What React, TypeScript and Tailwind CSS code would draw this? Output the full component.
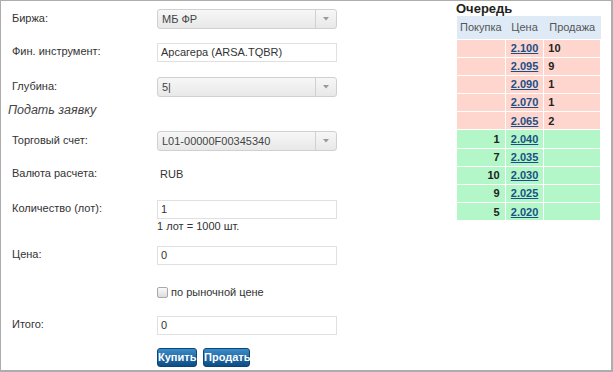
const asks = [
  { price: "2.100", qty: "10" },
  { price: "2.095", qty: "9" },
  { price: "2.090", qty: "1" },
  { price: "2.070", qty: "1" },
  { price: "2.065", qty: "2" },
];

const bids = [
  { price: "2.040", qty: "1" },
  { price: "2.035", qty: "7" },
  { price: "2.030", qty: "10" },
  { price: "2.025", qty: "9" },
  { price: "2.020", qty: "5" },
];

function Select({ value }: { value: string }) {
  return (
    <div className="flex h-[20px] w-[180px] items-center rounded-[3px] border border-[#d0d0d0] bg-gradient-to-b from-[#f7f7f7] to-[#e8e8e8] text-[#444]">
      <span className="flex-1 pl-[4px]">{value}</span>
      <span className="flex h-full w-[21px] items-center justify-center border-l border-[#d0d0d0]">
        <svg width="6" height="4" viewBox="0 0 6 4">
          <path d="M0 0 L6 0 L3 3.5 Z" fill="#999" />
        </svg>
      </span>
    </div>
  );
}

function Field({ value }: { value: string }) {
  return (
    <div className="flex h-[19px] w-[180px] items-center border border-[#e0e0e0] bg-white pl-[3px] text-[#333]">
      {value}
    </div>
  );
}

function Row({ label, children, className = "" }: { label: string; children: React.ReactNode; className?: string }) {
  return (
    <div className={`flex items-center ${className}`}>
      <div className="w-[145px] -translate-y-[1px]">{label}</div>
      {children}
    </div>
  );
}

export default function App() {
  return (
    <div
      className="flex h-[372px] w-[613px] border-t border-l border-r-2 border-b-2 border-[#adadad] bg-white text-[11px] text-[#333]"
      style={{ fontFamily: "'Liberation Sans', Arial, sans-serif" }}
    >
      <div className="flex w-[455px] flex-col pl-[11px] pt-[8px]">
        <Row label="Биржа:" className="h-[20px]">
          <Select value="МБ ФР" />
        </Row>
        <Row label="Фин. инструмент:" className="mt-[14px] h-[19px]">
          <Field value="Арсагера (ARSA.TQBR)" />
        </Row>
        <Row label="Глубина:" className="mt-[15px] h-[20px]">
          <Select value="5|" />
        </Row>
        <div className="-ml-[4px] mt-[5px] h-[16px] text-[12.5px] italic leading-[16px] text-[#444]">
          Подать заявку
        </div>
        <Row label="Торговый счет:" className="mt-[13px] h-[20px]">
          <Select value="L01-00000F00345340" />
        </Row>
        <Row label="Валюта расчета:" className="mt-[13px] h-[20px]">
          <span className="pl-[3px]">RUB</span>
        </Row>
        <Row label="Количество (лот):" className="mt-[16px] h-[19px]">
          <Field value="1" />
        </Row>
        <div className="mt-[1px] h-[12px] pl-[145px] leading-[12px]">1 лот = 1000 шт.</div>
        <Row label="Цена:" className="mt-[14px] h-[19px]">
          <Field value="0" />
        </Row>
        <div className="mt-[17px] flex h-[20px] items-center pl-[145px]">
          <span className="h-[11px] w-[11px] rounded-[2px] border border-[#a8a8a8] bg-gradient-to-b from-[#fafafa] to-[#dcdcdc]" />
          <span className="ml-[3px]">по рыночной цене</span>
        </div>
        <Row label="Итого:" className="mt-[14px] h-[19px]">
          <Field value="0" />
        </Row>
        <div className="mt-[13px] flex h-[19px] gap-[6px] pl-[145px]">
          <button className="h-[19px] w-[40px] rounded-[3px] border border-[#0b4476] bg-gradient-to-b from-[#3a8cc8] to-[#0c4d86] text-[11px] font-bold text-white">
            Купить
          </button>
          <button className="h-[19px] w-[47px] rounded-[3px] border border-[#0b4476] bg-gradient-to-b from-[#3a8cc8] to-[#0c4d86] text-[11px] font-bold text-white">
            Продать
          </button>
        </div>
      </div>

      <div className="flex flex-col">
        <div className="h-[15px] text-[13px] font-bold leading-[15px] text-[#222]">Очередь</div>
        <table className="w-[145px] border-collapse">
          <thead>
            <tr className="h-[23px] bg-[#deebf7] text-[#555]">
              <th className="w-[49px] font-normal">Покупка</th>
              <th className="w-[39px] font-normal">Цена</th>
              <th className="w-[57px] font-normal">Продажа</th>
            </tr>
          </thead>
          <tbody>
            {asks.map((r) => (
              <tr key={r.price} className="h-[18.2px] bg-[#ffd6cd] font-bold">
                <td className="border border-white" />
                <td className="border border-white text-center">
                  <a className="text-[#1b4f86] underline">{r.price}</a>
                </td>
                <td className="border border-white pl-[4px] text-[#222]">{r.qty}</td>
              </tr>
            ))}
            {bids.map((r) => (
              <tr key={r.price} className="h-[18.2px] bg-[#b3f7c8] font-bold">
                <td className="border border-white pr-[5px] text-right text-[#222]">{r.qty}</td>
                <td className="border border-white text-center">
                  <a className="text-[#1b4f86] underline">{r.price}</a>
                </td>
                <td className="border border-white" />
              </tr>
            ))}
          </tbody>
        </table>
      </div>
    </div>
  );
}
